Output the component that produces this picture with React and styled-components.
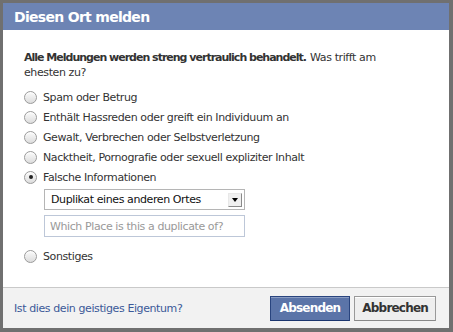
import React, { useState } from "react";
import styled, { createGlobalStyle } from "styled-components";

const GlobalStyle = createGlobalStyle`
	html, body {
		margin: 0;
		padding: 0;
		background: #6e6e6e;
	}
	body {
		font-family: "DejaVu Sans", "Liberation Sans", sans-serif;
		font-size: 11px;
		letter-spacing: -0.4px;
		color: #333;
	}
`;

const Frame = styled.div`
	width: 453px;
	height: 332px;
	box-sizing: border-box;
	padding: 3px 4px 4px 3px;
	background: #707070;
`;

const Dialog = styled.div`
	height: 100%;
	display: flex;
	flex-direction: column;
	background: #fff;
`;

const Header = styled.div`
	height: 27px;
	display: flex;
	align-items: center;
	padding: 0 11px;
	background: #6d84b4;
	color: #fff;
	font-size: 14px;
	font-weight: bold;
	letter-spacing: -0.7px;
`;

const Body = styled.div`
	flex: 1;
	padding: 20px 21px 0 21px;
`;

const Intro = styled.p`
	max-width: 385px;
	margin: 0 0 7px 0;
	line-height: 15px;
	b {
		font-weight: bold;
		letter-spacing: -1px;
		margin-right: 1px;
	}
`;

const Options = styled.div`
	display: flex;
	flex-direction: column;
`;

const Option = styled.label`
	height: 20px;
	display: flex;
	align-items: center;
	gap: 6px;
	cursor: pointer;
`;

const Radio = styled.span`
	width: 11px;
	height: 11px;
	border-radius: 50%;
	border: 1px solid #9a9a9a;
	background: linear-gradient(#fbfbfb, #dcdcdc);
	box-shadow: inset 0 1px 1px rgba(255, 255, 255, 0.8);
	display: flex;
	align-items: center;
	justify-content: center;
	&::after {
		content: "";
		width: 4px;
		height: 4px;
		border-radius: 50%;
		background: ${(p) => (p.$checked ? "#222" : "transparent")};
	}
`;

const SubFields = styled.div`
	display: flex;
	flex-direction: column;
	gap: 5px;
	padding: 2px 0 9px 20px;
`;

const Select = styled.div`
	width: 201px;
	height: 21px;
	box-sizing: border-box;
	border: 1px solid #b5b5b5;
	display: flex;
	align-items: center;
	justify-content: space-between;
	padding: 0 2px 0 6px;
	color: #111;
	font-size: 11px;
	background: #fff;
`;

const Arrow = styled.span`
	width: 14px;
	height: 14px;
	box-sizing: border-box;
	border: 1px solid;
	border-color: #e8e8e8 #8a8a8a #8a8a8a #e8e8e8;
	background: #f0f0f0;
	display: flex;
	align-items: center;
	justify-content: center;
	&::after {
		content: "";
		border-left: 3px solid transparent;
		border-right: 3px solid transparent;
		border-top: 4px solid #000;
	}
`;

const Input = styled.input`
	width: 201px;
	height: 22px;
	box-sizing: border-box;
	border: 1px solid #bdc7d8;
	padding: 0 5px;
	font-family: inherit;
	font-size: 11px;
	letter-spacing: -0.4px;
	color: #333;
	outline: none;
	&::placeholder {
		color: #999;
	}
`;

const Footer = styled.div`
	height: 41px;
	box-sizing: border-box;
	border-top: 1px solid #c9c9c9;
	background: #f2f2f2;
	display: flex;
	align-items: center;
	justify-content: space-between;
	padding: 0 13px 0 11px;
`;

const Link = styled.a`
	color: #3b5998;
	text-decoration: none;
	font-size: 11px;
	cursor: pointer;
`;

const Buttons = styled.div`
	display: flex;
	gap: 4px;
`;

const Button = styled.button`
	height: 25px;
	box-sizing: border-box;
	padding: ${(p) => (p.$primary ? "0 9px" : "0 7px")};
	font-family: inherit;
	font-size: 12px;
	font-weight: bold;
	letter-spacing: -0.8px;
	cursor: pointer;
	border: 1px solid ${(p) => (p.$primary ? "#29447e" : "#999")};
	border-bottom-color: ${(p) => (p.$primary ? "#1a356e" : "#888")};
	background: ${(p) => (p.$primary ? "#5b74a8" : "#eee")};
	color: ${(p) => (p.$primary ? "#fff" : "#333")};
	box-shadow: ${(p) =>
		p.$primary ? "inset 0 1px 0 #8a9cc2" : "inset 0 1px 0 #fff"};
`;

const options = [
	"Spam oder Betrug",
	"Enthält Hassreden oder greift ein Individuum an",
	"Gewalt, Verbrechen oder Selbstverletzung",
	"Nacktheit, Pornografie oder sexuell expliziter Inhalt",
	"Falsche Informationen",
];

const App = () => {
	const [selected, setSelected] = useState(4);

	return (
		<>
			<GlobalStyle />
			<Frame>
				<Dialog>
					<Header>Diesen Ort melden</Header>
					<Body>
						<Intro>
							<b>Alle Meldungen werden streng vertraulich behandelt.</b> Was
							trifft am ehesten zu?
						</Intro>
						<Options>
							{options.map((label, i) => (
								<Option key={label} onClick={() => setSelected(i)}>
									<Radio $checked={selected === i} />
									{label}
								</Option>
							))}
							{selected === 4 && (
								<SubFields>
									<Select>
										Duplikat eines anderen Ortes
										<Arrow />
									</Select>
									<Input placeholder="Which Place is this a duplicate of?" />
								</SubFields>
							)}
							<Option onClick={() => setSelected(5)}>
								<Radio $checked={selected === 5} />
								Sonstiges
							</Option>
						</Options>
					</Body>
					<Footer>
						<Link>Ist dies dein geistiges Eigentum?</Link>
						<Buttons>
							<Button $primary>Absenden</Button>
							<Button>Abbrechen</Button>
						</Buttons>
					</Footer>
				</Dialog>
			</Frame>
		</>
	);
};

export default App;
